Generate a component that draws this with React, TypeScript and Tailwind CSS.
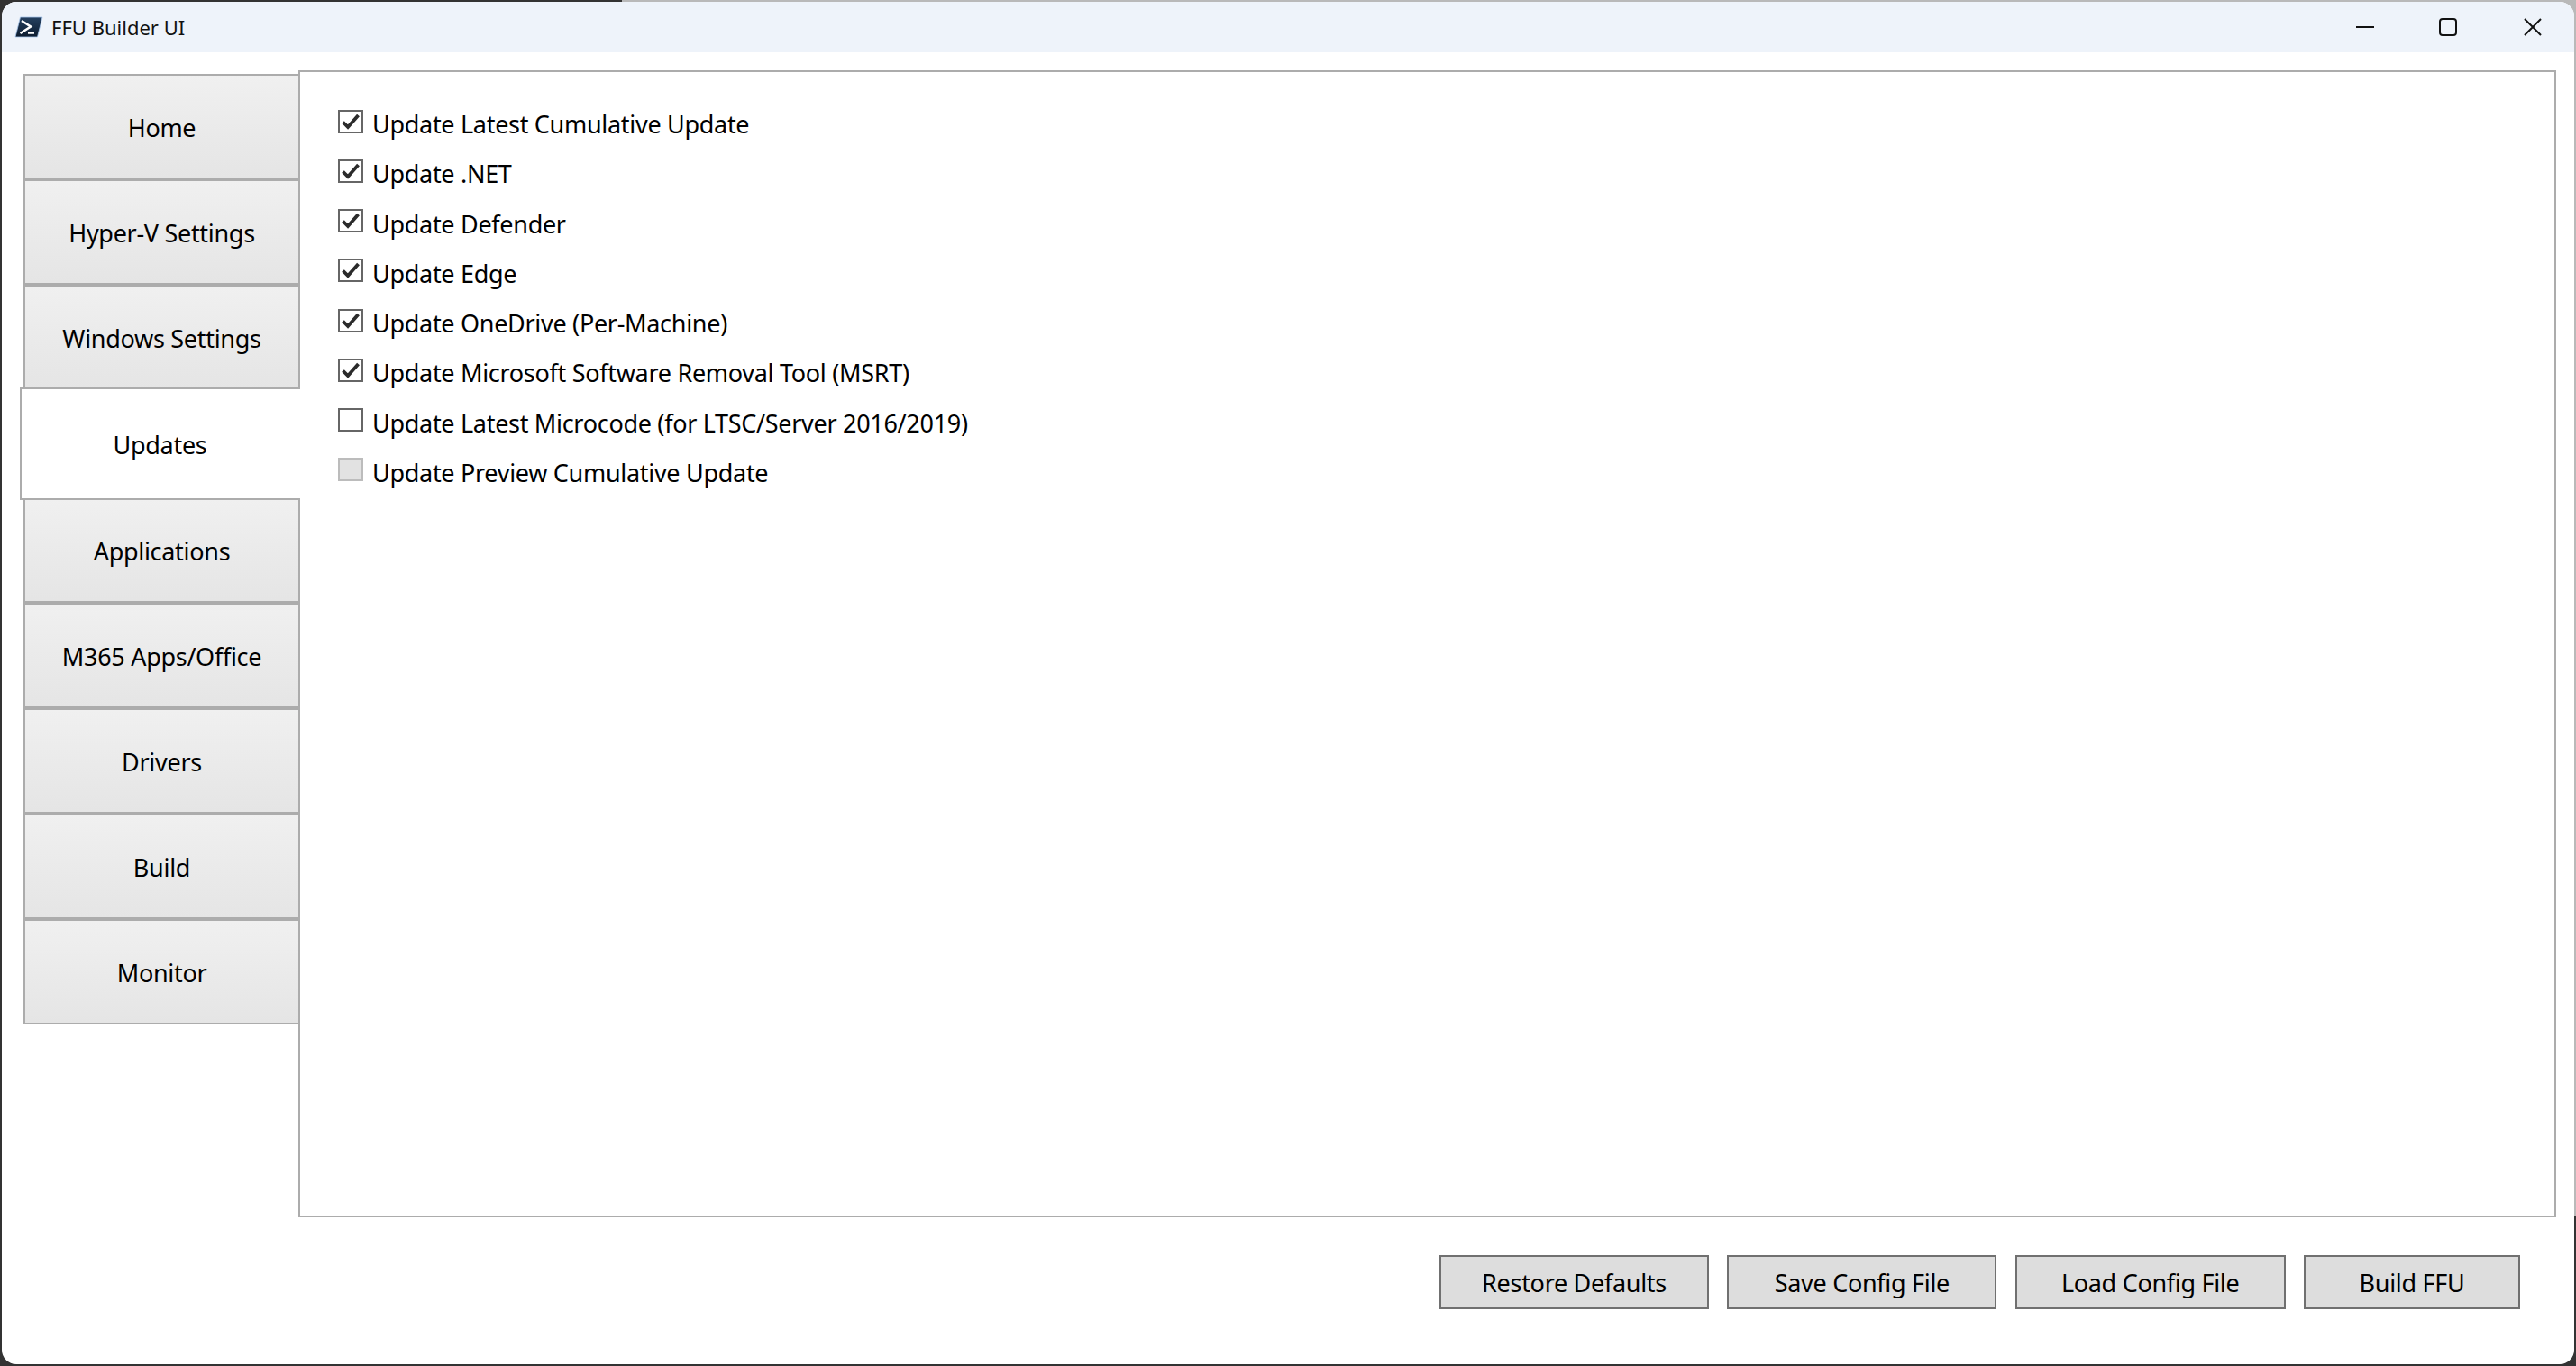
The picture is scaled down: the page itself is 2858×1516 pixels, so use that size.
import React from 'react';

const fontStack = "font-['Noto_Sans','Open_Sans',sans-serif]";

const tabs = ['Home', 'Hyper-V Settings', 'Windows Settings', 'Updates', 'Applications', 'M365 Apps/Office', 'Drivers', 'Build', 'Monitor'];

const updates = [
    { label: 'Update Latest Cumulative Update', state: 'checked' },
    { label: 'Update .NET', state: 'checked' },
    { label: 'Update Defender', state: 'checked' },
    { label: 'Update Edge', state: 'checked' },
    { label: 'Update OneDrive (Per-Machine)', state: 'checked' },
    { label: 'Update Microsoft Software Removal Tool (MSRT)', state: 'checked' },
    { label: 'Update Latest Microcode (for LTSC/Server 2016/2019)', state: 'empty' },
    { label: 'Update Preview Cumulative Update', state: 'disabled' },
];

const buttons = [
    { label: 'Restore Defaults', width: 'w-[299px]' },
    { label: 'Save Config File', width: 'w-[299px]' },
    { label: 'Load Config File', width: 'w-[300px]' },
    { label: 'Build FFU', width: 'w-[240px]' },
];

const PowerShellIcon = () => (
    <svg width="32" height="24" viewBox="0 0 32 24">
        <defs>
            <linearGradient id="ps" x1="0" y1="0" x2="0" y2="1">
                <stop offset="0" stopColor="#25405f" />
                <stop offset="1" stopColor="#0d1c30" />
            </linearGradient>
        </defs>
        <path d="M6.5 1h24.5L25.5 23H1z" fill="url(#ps)" stroke="#a9c8ec" strokeWidth="0.8" />
        <path d="M8 5l10 6.5L6.5 19" fill="none" stroke="#fff" strokeWidth="2.6" />
        <path d="M15 18.5h7" stroke="#fff" strokeWidth="2.6" />
    </svg>
);

const CheckBox = ({ state }: { state: string }) => (
    <div className={`w-[28px] h-[26px] shrink-0 flex items-center justify-center border-2 ${state === 'disabled' ? 'border-[#bcbcbc] bg-[#e2e2e2]' : 'border-[#666666] bg-white'}`}>
        {state === 'checked' && (
            <svg width="20" height="18" viewBox="0 0 20 18">
                <path d="M1.5 9.5l5.5 5.5L18.5 2" fill="none" stroke="#2b2b2b" strokeWidth="3.8" />
            </svg>
        )}
    </div>
);

const App: React.FC = () => {
    return (
        <div className={`relative w-[2858px] h-[1516px] overflow-hidden bg-[#333333] p-[2px] text-black ${fontStack}`}>
            <div className="absolute left-[690px] right-0 top-0 h-[1350px] bg-[#b9b9b9]" />
            <div className="relative h-full flex flex-col bg-white rounded-[16px] overflow-hidden">
                <div className="h-[56px] shrink-0 flex items-center bg-[#eef3fa]">
                    <div className="ml-[14px] w-[41px]"><PowerShellIcon /></div>
                    <span className="text-[22px] leading-none text-[#111111]">FFU Builder UI</span>
                    <div className="ml-auto flex items-center">
                        <svg width="22" height="22" viewBox="0 0 22 22" className="mr-[70px]"><path d="M1 11h20" stroke="#111" strokeWidth="2" /></svg>
                        <svg width="22" height="22" viewBox="0 0 22 22" className="mr-[72px]"><rect x="2" y="2" width="18" height="18" rx="3" fill="none" stroke="#111" strokeWidth="2" /></svg>
                        <svg width="22" height="22" viewBox="0 0 22 22" className="mr-[35px]"><path d="M2 2l18 18M20 2L2 20" stroke="#111" strokeWidth="2" /></svg>
                    </div>
                </div>
                <div className="h-[1293px] shrink-0 flex">
                    <div className="ml-[24px] mt-[24px] w-[307px] shrink-0 flex flex-col">
                        {tabs.map(tab => (
                            tab === 'Updates' ? (
                                <div key={tab} className="relative z-10 -ml-[4px] -mt-[3px] -mb-[3px] w-[311px] h-[125px] shrink-0 flex items-center justify-center pt-[3px] pr-[2px] bg-white border-2 border-r-0 border-[#acacac] text-[27px] tracking-[-0.3px]">
                                    {tab}
                                </div>
                            ) : (
                                <div key={tab} className="h-[117px] shrink-0 flex items-center justify-center pt-[3px] bg-gradient-to-b from-[#f0f0f0] to-[#e5e5e5] border-2 border-[#acacac] text-[27px] tracking-[-0.3px]">
                                    {tab}
                                </div>
                            )
                        ))}
                    </div>
                    <div className="-ml-[2px] mt-[20px] mr-[20px] flex-1 border-2 border-[#acacac] pl-[42px] pt-[27px]">
                        {updates.map(item => (
                            <div key={item.label} className="h-[55.25px] flex items-center gap-[10px]">
                                <CheckBox state={item.state} />
                                <span className="text-[27px] tracking-[-0.3px] leading-none pt-[6px]">{item.label}</span>
                            </div>
                        ))}
                    </div>
                </div>
                <div className="flex justify-end gap-[20.33px] pt-[42px] pr-[60px]">
                    {buttons.map(btn => (
                        <div key={btn.label} className={`${btn.width} h-[60px] flex items-center justify-center pt-[2px] bg-[#dddddd] border-2 border-[#707070] text-[27px] tracking-[-0.3px]`}>
                            {btn.label}
                        </div>
                    ))}
                </div>
            </div>
        </div>
    );
};

export default App;
